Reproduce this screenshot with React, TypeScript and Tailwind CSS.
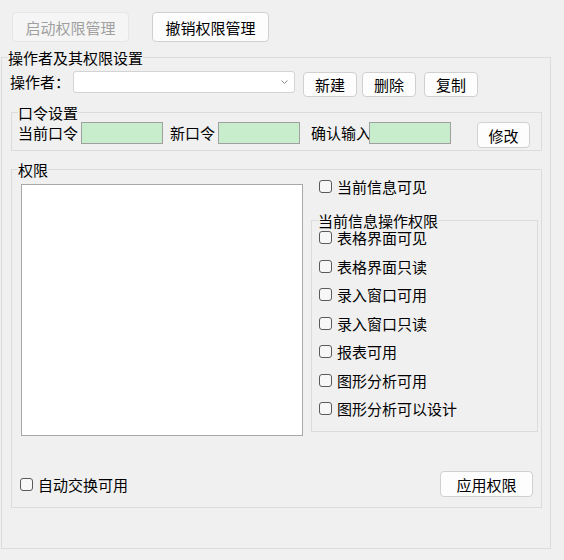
import React from 'react';

const subRights = [
    '表格界面可见',
    '表格界面只读',
    '录入窗口可用',
    '录入窗口只读',
    '报表可用',
    '图形分析可用',
    '图形分析可以设计',
];

function Btn({ label, className = '', disabled = false }: { label: string; className?: string; disabled?: boolean }) {
    return (
        <button
            disabled={disabled}
            className={`flex items-center justify-center rounded-[4px] border text-[15px] leading-none ${
                disabled ? 'bg-[#f5f5f5] border-[#e6e6e6] text-[#a0a0a0]' : 'bg-[#fdfdfd] border-[#d0d0d0] text-black'
            } ${className}`}
        >
            {label}
        </button>
    );
}

function Check({ label }: { label: string }) {
    return (
        <label className="flex items-center h-[13px]">
            <span className="w-[13px] h-[13px] rounded-[3px] border border-[#5a5a5a] bg-[#f7f7f7]" />
            <span className="ml-[5px] text-[15px] leading-[15px] whitespace-nowrap">{label}</span>
        </label>
    );
}

export default function App() {
    return (
        <div className="w-[564px] h-[560px] bg-[#f0f0f0] pt-[12px] text-black font-['Noto_Sans_CJK_SC',sans-serif]">
            <div className="flex pl-[12px] gap-[23px]">
                <Btn label="启动权限管理" disabled className="w-[117px] h-[30px]" />
                <Btn label="撤销权限管理" className="w-[117px] h-[30px]" />
            </div>

            <fieldset className="ml-[1px] mt-[8px] w-[550px] border border-[#dcdcdc] pb-[40px]">
                <legend className="ml-[6px] text-[15px] leading-[15px]">操作者及其权限设置</legend>

                <div className="flex items-start pl-[8px] pt-[6px]">
                    <span className="text-[15px] leading-[22px]">操作者：</span>
                    <div className="ml-[3px] w-[222px] h-[22px] bg-white border border-[#d4d4d4] rounded-[3px] flex items-center justify-end pr-[6px]">
                        <svg width="7" height="4" viewBox="0 0 7 4" fill="none">
                            <path d="M0.5 0.5 L3.5 3.5 L6.5 0.5" stroke="#8a8a8a" strokeWidth="1" />
                        </svg>
                    </div>
                    <Btn label="新建" className="ml-[8px] mt-[1px] w-[54px] h-[25px]" />
                    <Btn label="删除" className="ml-[5px] mt-[1px] w-[54px] h-[25px]" />
                    <Btn label="复制" className="ml-[8px] mt-[1px] w-[54px] h-[25px]" />
                </div>

                <fieldset className="ml-[9px] mt-[8px] w-[531px] border border-[#dcdcdc] pb-[2px]">
                    <legend className="ml-[6px] text-[15px] leading-[15px]">口令设置</legend>
                    <div className="flex items-start pl-[6px] pt-[2px]">
                        <span className="text-[15px] leading-[22px]">当前口令</span>
                        <div className="ml-[3px] w-[82px] h-[22px] bg-[#c7edcc] border border-[#a0a0a0]" />
                        <span className="ml-[7px] text-[15px] leading-[22px]">新口令</span>
                        <div className="ml-[3px] w-[82px] h-[22px] bg-[#c7edcc] border border-[#a0a0a0]" />
                        <span className="ml-[11px] text-[15px] leading-[22px]">确认输入</span>
                        <div className="-ml-[2px] w-[82px] h-[22px] bg-[#c7edcc] border border-[#a0a0a0]" />
                        <Btn label="修改" className="ml-[26px] w-[53px] h-[26px]" />
                    </div>
                </fieldset>

                <fieldset className="ml-[9px] mt-[11px] w-[531px] border border-[#dcdcdc] pb-[10px]">
                    <legend className="ml-[6px] text-[15px] leading-[15px]">权限</legend>
                    <div className="flex items-start">
                        <div className="ml-[9px] mt-[7px] w-[282px] h-[252px] bg-white border border-[#a8a8a8]" />
                        <div className="ml-[8px] w-[227px]">
                            <div className="pl-[8px] mt-[3px]">
                                <Check label="当前信息可见" />
                            </div>
                            <fieldset className="mt-[20px] w-[227px] border border-[#dcdcdc] pb-[16px]">
                                <legend className="ml-[6px] text-[15px] leading-[15px]">当前信息操作权限</legend>
                                <div className="flex flex-col gap-[15.5px] pl-[7px] pt-[3px]">
                                    {subRights.map((r) => (
                                        <Check key={r} label={r} />
                                    ))}
                                </div>
                            </fieldset>
                        </div>
                    </div>
                    <div className="flex items-center justify-between mt-[35px] h-[26px] pl-[8px] pr-[8px]">
                        <Check label="自动交换可用" />
                        <Btn label="应用权限" className="w-[93px] h-[26px]" />
                    </div>
                </fieldset>
            </fieldset>
        </div>
    );
}
